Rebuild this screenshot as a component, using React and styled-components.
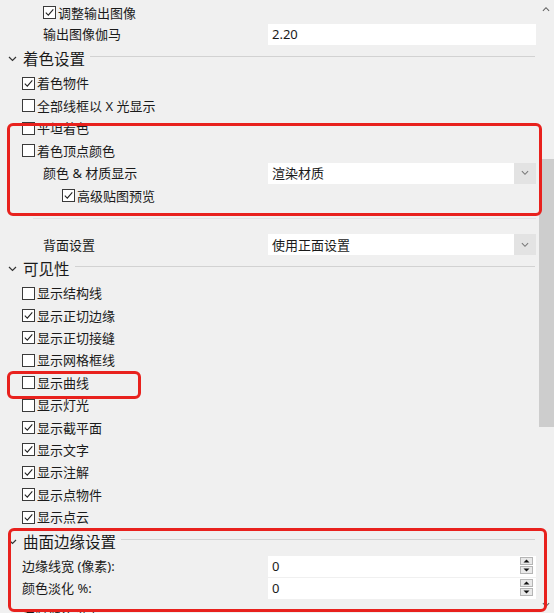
import React from 'react';
import styled, { createGlobalStyle } from 'styled-components';

const GlobalStyle = createGlobalStyle`
    html, body {
        margin: 0;
        padding: 0;
        background: #f0f0f0;
        overflow: hidden;
    }
    body {
        font-family: "Noto Sans", "Noto Sans CJK SC", sans-serif;
        font-size: 13px;
        color: #1a1a1a;
    }
`;

const Window = styled.div`
    position: relative;
    display: flex;
    width: 554px;
    height: 613px;
    overflow: hidden;
    background: #f0f0f0;
`;

const Panel = styled.div`
    width: 537px;
    padding-top: 2px;
    display: flex;
    flex-direction: column;
`;

const Row = styled.div`
    display: grid;
    grid-template-columns: 268px 268px;
    align-items: center;
    height: ${ props => props.h || 22 }px;
    margin-top: ${ props => props.offset || 0 }px;
    flex-shrink: 0;
`;

const Label = styled.div`
    display: flex;
    align-items: center;
    gap: 2px;
    padding-left: ${ props => props.indent }px;
    line-height: 16px;
    white-space: nowrap;
`;

const Box = styled.span`
    display: inline-flex;
    width: 13px;
    height: 13px;
    box-sizing: border-box;
    border: 1px solid #3a3a3a;
    background: #fff;
    flex-shrink: 0;
    svg { display: block; }
`;

const Field = styled.div`
    position: relative;
    display: flex;
    align-items: center;
    height: 21px;
    background: #fff;
    padding-left: 4px;
    line-height: 16px;
`;

const DropButton = styled.span`
    position: absolute;
    right: 0;
    top: 0;
    bottom: 0;
    width: 22px;
    display: flex;
    align-items: center;
    justify-content: center;
    background: #e3e3e3;
`;

const Spinner = styled.span`
    position: absolute;
    right: 3px;
    top: 1px;
    display: flex;
    flex-direction: column;
    gap: 1px;
`;

const SpinBtn = styled.span`
    display: flex;
    align-items: center;
    justify-content: center;
    width: 13px;
    height: 8px;
    border: 1px solid #b5b5b5;
    background: #e9e9e9;
    box-sizing: border-box;
`;

const Header = styled.div`
    display: flex;
    align-items: center;
    height: ${ props => props.h }px;
    flex-shrink: 0;
    padding-left: 8px;
    width: 527px;
`;

const HeaderTitle = styled.span`
    font-size: 15.5px;
    line-height: 20px;
    margin-left: 6px;
    white-space: nowrap;
`;

const HeaderLine = styled.span`
    flex: 1;
    height: 1px;
    background: #d2d2d2;
    margin-left: 5px;
    margin-top: -5px;
`;

const Blank = styled.div`
    height: ${ props => props.h }px;
    flex-shrink: 0;
    display: flex;
    align-items: center;
    padding-left: 33px;
    &::after {
        content: '';
        flex: 1;
        height: 1px;
        margin-top: -4px;
        margin-right: 1px;
        background: #e2e2e2;
    }
`;

const ScrollBar = styled.div`
    position: relative;
    width: 17px;
    display: flex;
    flex-direction: column;
    align-items: center;
`;

const Arrow = styled.div`
    height: 17px;
    display: flex;
    align-items: center;
    justify-content: center;
    margin-top: ${ props => props.bottom ? 'auto' : '0' };
`;

const Thumb = styled.div`
    width: 15px;
    height: 268px;
    margin-top: 142px;
    margin-left: 1px;
    background: #cdcdcd;
`;

const Mark = styled.div`
    position: absolute;
    box-sizing: border-box;
    border: 3px solid #e8211d;
    border-radius: 6px;
`;

const Check = ( { on } ) => (
    <Box>
        { on && (
            <svg width="11" height="11" viewBox="0 0 11 11">
                <path d="M1.8 5.6 L4.3 8.1 L9.3 2.4" fill="none" stroke="#222" strokeWidth="1.1"/>
            </svg>
        ) }
    </Box>
);

const Chevron = ( { up, color = '#333', w = 9 } ) => (
    <svg width={ w } height="6" viewBox="0 0 9 6">
        <path d={ up ? 'M1 5 L4.5 1.5 L8 5' : 'M1 1 L4.5 4.5 L8 1' } fill="none" stroke={ color } strokeWidth="1.2"/>
    </svg>
);

const CheckRow = ( { label, on, indent = 22, h } ) => (
    <Row h={ h }>
        <Label indent={ indent }>
            <Check on={ on }/>
            <span>{ label }</span>
        </Label>
    </Row>
);

const Section = ( { title, h } ) => (
    <Header h={ h }>
        <Chevron/>
        <HeaderTitle>{ title }</HeaderTitle>
        <HeaderLine/>
    </Header>
);

const SelectRow = ( { label, value, h } ) => (
    <Row h={ h }>
        <Label indent={ 43 }>{ label }</Label>
        <Field>
            { value }
            <DropButton><Chevron color="#777" w={ 8 }/></DropButton>
        </Field>
    </Row>
);

const SpinRow = ( { label, value } ) => (
    <Row h={ 22 }>
        <Label indent={ 22 }>{ label }</Label>
        <Field>
            { value }
            <Spinner>
                <SpinBtn>
                    <svg width="7" height="4" viewBox="0 0 7 4"><path d="M0.5 3.5 L3.5 0.5 L6.5 3.5 Z" fill="#111"/></svg>
                </SpinBtn>
                <SpinBtn>
                    <svg width="7" height="4" viewBox="0 0 7 4"><path d="M0.5 0.5 L3.5 3.5 L6.5 0.5 Z" fill="#111"/></svg>
                </SpinBtn>
            </Spinner>
        </Field>
    </Row>
);

const visibility = [
    [ '显示结构线', false ],
    [ '显示正切边缘', true ],
    [ '显示正切接缝', true ],
    [ '显示网格框线', false ],
    [ '显示曲线', false ],
    [ '显示灯光', false ],
    [ '显示截平面', true ],
    [ '显示文字', true ],
    [ '显示注解', true ],
    [ '显示点物件', true ],
    [ '显示点云', true ],
];

export default function App() {
    return (
        <>
            <GlobalStyle/>
            <Window>
                <Panel>
                    <CheckRow label="调整输出图像" on indent={ 43 } h={ 21 }/>
                    <Row h={ 22 }>
                        <Label indent={ 43 }>输出图像伽马</Label>
                        <Field>2.20</Field>
                    </Row>
                    <Section title="着色设置" h={ 27 }/>
                    <CheckRow label="着色物件" on/>
                    <CheckRow label="全部线框以 X 光显示" h={ 23 }/>
                    <CheckRow label="平坦着色"/>
                    <CheckRow label="着色顶点颜色" h={ 23 }/>
                    <SelectRow label="颜色 & 材质显示" value="渲染材质"/>
                    <CheckRow label="高级贴图预览" on indent={ 62 } h={ 23 }/>
                    <Blank h={ 26 }/>
                    <SelectRow label="背面设置" value="使用正面设置" h={ 23 }/>
                    <Section title="可见性" h={ 26 }/>
                    { visibility.map( ( [ label, on ] ) => (
                        <CheckRow key={ label } label={ label } on={ on } h={ 22.4 }/>
                    ) ) }
                    <Section title="曲面边缘设置" h={ 27 }/>
                    <SpinRow label="边缘线宽 (像素):" value="0"/>
                    <SpinRow label="颜色淡化 %:" value="0"/>
                    <Row h={ 22 } offset={ 5 }>
                        <Label indent={ 22 }>边缘颜色设置</Label>
                    </Row>
                </Panel>
                <ScrollBar>
                    <Arrow><Chevron up color="#606060" w={ 8 }/></Arrow>
                    <Thumb/>
                    <Arrow bottom><Chevron color="#606060" w={ 8 }/></Arrow>
                </ScrollBar>
                <Mark style={ { left: 7, top: 123, width: 535, height: 93 } }/>
                <Mark style={ { left: 7, top: 371, width: 134, height: 28 } }/>
                <Mark style={ { left: 8, top: 528, width: 539, height: 84 } }/>
            </Window>
        </>
    );
}
